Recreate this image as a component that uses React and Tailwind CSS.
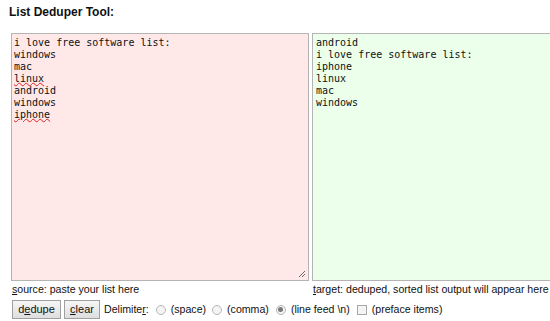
import React from "react";

const sourceLines = [
  { text: "i love free software list:" },
  { text: "windows" },
  { text: "mac" },
  { text: "linux", typo: true },
  { text: "android" },
  { text: "windows" },
  { text: "iphone", typo: true },
];

const targetLines = ["android", "i love free software list:", "iphone", "linux", "mac", "windows"];

const Radio = ({ checked }) => (
  <span className="inline-flex h-[10px] w-[10px] items-center justify-center rounded-full border border-[#b8b8b8] bg-[#f4f4f4]">
    {checked && <span className="h-[5px] w-[5px] rounded-full bg-[#7a7a7a]" />}
  </span>
);

const Button = ({ children, width }) => (
  <button
    className={`${width} h-[19px] border border-[#a0a0a0] bg-gradient-to-b from-[#f6f6f6] to-[#dedede] text-[11px] leading-none text-[#111]`}
  >
    {children}
  </button>
);

export default function App() {
  return (
    <div
      className="w-[550px] h-[321px] overflow-hidden bg-white text-[#111]"
      style={{ fontFamily: "'Liberation Sans', Arial, sans-serif" }}
    >
      <div className="pl-[9px] pt-[5px] text-[12px] font-bold leading-[14px]">List Deduper Tool:</div>

      <div className="mt-[14px] flex gap-[3px] pl-[11px]">
        <div className="relative h-[248px] w-[298px] shrink-0 border border-[#b4b4b4] bg-[#ffe8e8] px-[2px] pt-[3px] font-['DejaVu_Sans_Mono',monospace] text-[10px] leading-[12px]">
          {sourceLines.map((l, i) => (
            <div key={i}>
              {l.typo ? (
                <span className="underline decoration-wavy decoration-[#e02020] decoration-1 underline-offset-0">{l.text}</span>
              ) : (
                l.text
              )}
            </div>
          ))}
          <svg className="absolute bottom-[2px] right-[2px]" width="8" height="8" viewBox="0 0 8 8">
            <path d="M7 1 L1 7 M7 4 L4 7" stroke="#666" strokeWidth="1" />
          </svg>
        </div>
        <div className="h-[248px] w-[298px] shrink-0 border border-[#b4b4b4] bg-[#ebffeb] px-[3px] pt-[3px] font-['DejaVu_Sans_Mono',monospace] text-[10px] leading-[12px]">
          {targetLines.map((l, i) => (
            <div key={i}>{l}</div>
          ))}
        </div>
      </div>

      <div className="mt-[1px] flex gap-[3px] pl-[12px] text-[10.6px] leading-[14px]">
        <div className="w-[298px] shrink-0">
          <span className="underline">s</span>ource: paste your list here
        </div>
        <div className="w-[236px] shrink-0 whitespace-nowrap">
          <span className="underline">t</span>arget: deduped, sorted list output will appear here
        </div>
      </div>

      <div className="mt-[4px] flex items-center gap-[3px] pl-[12px] text-[10.6px] leading-none">
        <Button width="w-[49px]">
          d<span className="underline">e</span>dupe
        </Button>
        <Button width="w-[36px]">
          <span className="underline">c</span>lear
        </Button>
        <span className="ml-[1px]">
          Delimite<span className="underline">r</span>:
        </span>
        <span className="ml-[4px] flex items-center gap-[5px]">
          <Radio />
          <span>(space)</span>
        </span>
        <span className="ml-[3px] flex items-center gap-[5px]">
          <Radio />
          <span>(comma)</span>
        </span>
        <span className="ml-[4px] flex items-center gap-[5px]">
          <Radio checked />
          <span>(line feed \n)</span>
        </span>
        <span className="ml-[4px] flex items-center gap-[5px]">
          <span className="h-[10px] w-[10px] border border-[#a8a8a8] bg-[#f4f4f4]" />
          <span>(preface items)</span>
        </span>
      </div>
    </div>
  );
}
